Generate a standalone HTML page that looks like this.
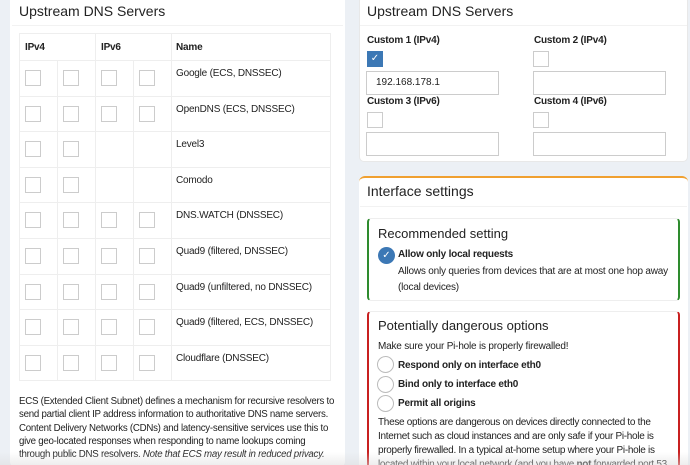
<html style="overflow:hidden;width:690px;height:465px"><head><style>
*{margin:0;padding:0;box-sizing:border-box}
body{width:690px;height:465px;overflow:hidden;background:#ecf0f5;font-family:"Liberation Sans",sans-serif;color:#222;position:relative}
.a{position:absolute}
.cb{position:absolute;width:16px;height:16px;border:1px solid #ccc;background:#fff}
.t{font-size:10px;letter-spacing:-0.2px}
.b{font-weight:bold}
.inp{position:absolute;border:1px solid #ccc;background:#fff;height:24px}
.rad{position:absolute;width:17px;height:17px;border:1px solid #bbb;border-radius:50%;background:#fff}
</style></head><body>
<div class="a" style="left:10px;top:-4px;width:335px;height:470px;background:#fff;border-radius:4px"></div>
<div class="a" style="left:19px;top:3px;font-size:14px">Upstream DNS Servers</div>
<div class="a" style="left:12px;top:25px;width:331px;border-top:1px solid #f2f2f2"></div>
<div class="a" style="left:19px;top:33px;width:312px;height:348px;border:1px solid #eee"></div>
<div class="a" style="left:95px;top:33px;height:348px;border-left:1px solid #eee"></div>
<div class="a" style="left:171px;top:33px;height:348px;border-left:1px solid #eee"></div>
<div class="a" style="left:57px;top:60px;height:321px;border-left:1px solid #eee"></div>
<div class="a" style="left:133px;top:60px;height:321px;border-left:1px solid #eee"></div>
<div class="a t b" style="left:25px;top:42px">IPv4</div>
<div class="a t b" style="left:101px;top:42px">IPv6</div>
<div class="a t b" style="left:176px;top:42px">Name</div>
<div id="rows"></div>
<div class="a" style="left:19px;top:395px;width:330px;font-size:9.7px;letter-spacing:-0.25px;line-height:13.3px;white-space:nowrap">ECS (Extended Client Subnet) defines a mechanism for recursive resolvers to<br>send partial client IP address information to authoritative DNS name servers.<br>Content Delivery Networks (CDNs) and latency-sensitive services use this to<br>give geo-located responses when responding to name lookups coming<br>through public DNS resolvers. <i>Note that ECS may result in reduced privacy.</i></div>

<div class="a" style="left:359px;top:-4px;width:329px;height:166px;background:#fff;border-radius:5px;border:1px solid #e8e8e8"></div>
<div class="a" style="left:367px;top:3px;font-size:14px">Upstream DNS Servers</div>
<div class="a" style="left:360px;top:25px;width:327px;border-top:1px solid #f2f2f2"></div>
<div class="a t b" style="left:367px;top:35px">Custom 1 (IPv4)</div>
<div class="a t b" style="left:534px;top:35px">Custom 2 (IPv4)</div>
<div class="a t b" style="left:367px;top:96px">Custom 3 (IPv6)</div>
<div class="a t b" style="left:534px;top:96px">Custom 4 (IPv6)</div>
<div class="cb" style="left:367px;top:51px;background:#3c78b5;border-color:#3c78b5;color:#fff;font-size:10px;text-align:center;line-height:14px">✓</div>
<div class="cb" style="left:533px;top:51px"></div>
<div class="cb" style="left:367px;top:112px"></div>
<div class="cb" style="left:533px;top:112px"></div>
<div class="inp" style="left:366px;top:71px;width:133px;font-size:10px;padding:5px 0 0 9px">192.168.178.1</div>
<div class="inp" style="left:533px;top:71px;width:133px"></div>
<div class="inp" style="left:366px;top:132px;width:133px"></div>
<div class="inp" style="left:533px;top:132px;width:133px"></div>

<div class="a" style="left:359px;top:176px;width:329px;height:289px;background:#fff;border-radius:6px 6px 0 0;border-top:2px solid #f0a030;overflow:hidden"></div>
<div class="a" style="left:367px;top:183px;font-size:14px">Interface settings</div>
<div class="a" style="left:360px;top:206px;width:327px;border-top:1px solid #f2f2f2"></div>
<div class="a" style="left:367px;top:218px;width:313px;height:83px;border:1px solid #eee;border-left:2px solid #2e8b2e;border-right:2px solid #2e8b2e;border-radius:4px"></div>
<div class="a" style="left:378px;top:226px;font-size:13px">Recommended setting</div>
<div class="a" style="left:378px;top:247px;width:17px;height:17px;border-radius:50%;background:#3c78b5;color:#fff;font-size:10px;text-align:center;line-height:17px">✓</div>
<div class="a t b" style="left:398px;top:249px">Allow only local requests</div>
<div class="a t" style="left:398px;top:264px;line-height:15.5px;width:282px">Allows only queries from devices that are at most one hop away (local devices)</div>
<div class="a" style="left:367px;top:311px;width:313px;height:160px;border:1px solid #eee;border-left:2px solid #c82020;border-right:2px solid #c82020;border-radius:4px"></div>
<div class="a" style="left:378px;top:318px;font-size:13px">Potentially dangerous options</div>
<div class="a t" style="left:378px;top:341px">Make sure your Pi-hole is properly firewalled!</div>
<div class="rad" style="left:377px;top:356px"></div><div class="a t b" style="left:398px;top:360px">Respond only on interface eth0</div>
<div class="rad" style="left:377px;top:376px"></div><div class="a t b" style="left:398px;top:379px">Bind only to interface eth0</div>
<div class="a t b" style="left:398px;top:398px">Permit all origins</div>
<div class="rad" style="left:377px;top:395px"></div>
<div class="a t" style="left:378px;top:416px;width:300px;line-height:14px;letter-spacing:-0.3px;height:49px;overflow:hidden">These options are dangerous on devices directly connected to the Internet such as cloud instances and are only safe if your Pi-hole is properly firewalled. In a typical at-home setup where your Pi-hole is located within your local network (and you have <b>not</b> forwarded port 53</div>
<div class="a" style="left:0;top:452px;width:690px;height:13px;background:linear-gradient(rgba(255,255,255,0),rgba(220,220,220,.5))"></div>
<script>
var names=["Google (ECS, DNSSEC)","OpenDNS (ECS, DNSSEC)","Level3","Comodo","DNS.WATCH (DNSSEC)","Quad9 (filtered, DNSSEC)","Quad9 (unfiltered, no DNSSEC)","Quad9 (filtered, ECS, DNSSEC)","Cloudflare (DNSSEC)"];
var h="";
for(var i=0;i<9;i++){var y=60+i*35.6;
h+='<div class="a" style="left:19px;top:'+y+'px;width:312px;border-top:1px solid #eee"></div>';
var xs=(i==2||i==3)?[25,63]:[25,63,101,139];
xs.forEach(function(x){h+='<div class="cb" style="left:'+x+'px;top:'+(y+10)+'px"></div>';});
h+='<div class="a t" style="left:176px;top:'+(y+8)+'px">'+names[i]+'</div>';}
document.getElementById("rows").innerHTML=h;
</script>
</body></html>
